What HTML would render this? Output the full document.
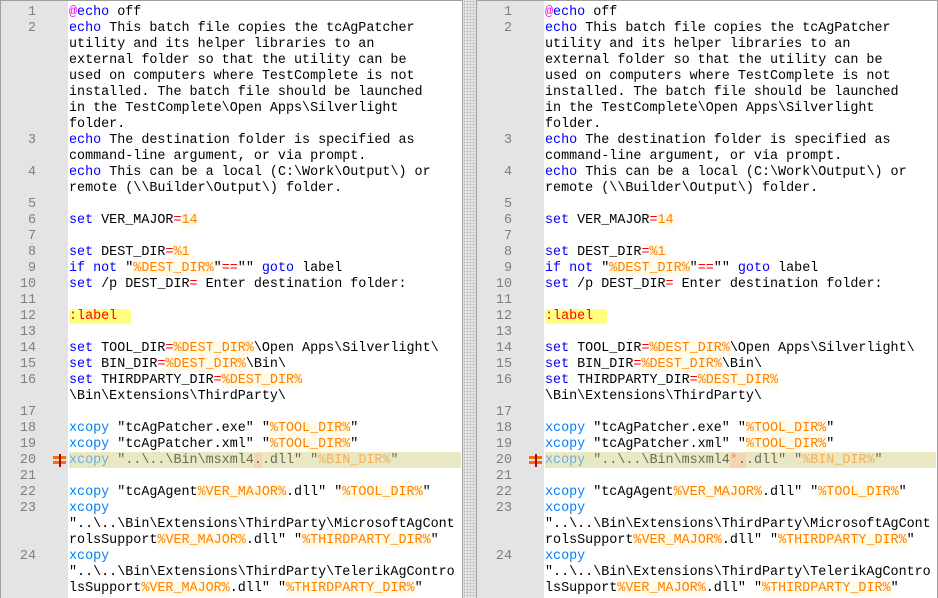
<!DOCTYPE html>
<html><head><meta charset="utf-8"><style>
body{margin:0;width:938px;height:598px;background:#fff;overflow:hidden;position:relative;font-family:"Liberation Mono",monospace;}
.pane{position:absolute;top:0;height:598px;border:1px solid #a0a0a0;border-bottom:none;background:#fff;overflow:hidden;box-sizing:border-box}
.gut{position:absolute;left:0;top:0;bottom:0;width:67px;background:#e4e4e4}
.code{position:absolute;top:4px;left:0;right:0}
.l{height:16px;line-height:16px;font-size:13.4px;white-space:pre;position:relative;color:#000}
.n{position:absolute;left:0;width:35px;text-align:right;color:#808080}
.t{position:absolute;left:68px}
.k{color:#0000ff}.x{color:#0080ff}.at{color:#ff00ff}.r{color:#ff0000}
.v{color:#ff8000;background:#fffbe6}
.lab{color:#ff0000;background:#ffff80;padding-right:14px}
.hl{position:absolute;left:68px;right:1px;top:-1px;height:16px;background:#e9e8c2}
.hl2 .t{opacity:.55}
.mk{position:absolute;left:52px;top:1px;width:13px;height:13px}
.split{position:absolute;left:463px;top:0;width:13px;height:598px;background:#f0f0f0;background-image:radial-gradient(#b8b8b8 1px,transparent 1.2px);background-size:3px 3px}
</style></head><body>
<div class="split"></div>
<div class="pane" style="left:0;width:463px" id="p1"></div>
<div class="pane" style="left:476px;width:462px" id="p2"></div>
<template id="tpl">
<div class="gut"></div>
<div class="code">
<div class="l"><span class="n">1</span><span class="t"><span class="at">@</span><span class="k">echo</span> off</span></div>
<div class="l"><span class="n">2</span><span class="t"><span class="k">echo</span> This batch file copies the tcAgPatcher</span></div>
<div class="l"><span class="t">utility and its helper libraries to an</span></div>
<div class="l"><span class="t">external folder so that the utility can be</span></div>
<div class="l"><span class="t">used on computers where TestComplete is not</span></div>
<div class="l"><span class="t">installed. The batch file should be launched</span></div>
<div class="l"><span class="t">in the TestComplete\Open Apps\Silverlight</span></div>
<div class="l"><span class="t">folder.</span></div>
<div class="l"><span class="n">3</span><span class="t"><span class="k">echo</span> The destination folder is specified as</span></div>
<div class="l"><span class="t">command-line argument, or via prompt.</span></div>
<div class="l"><span class="n">4</span><span class="t"><span class="k">echo</span> This can be a local (C:\Work\Output\) or</span></div>
<div class="l"><span class="t">remote (\\Builder\Output\) folder.</span></div>
<div class="l"><span class="n">5</span></div>
<div class="l"><span class="n">6</span><span class="t"><span class="k">set</span> VER_MAJOR<span class="r">=</span><span class="v">14</span></span></div>
<div class="l"><span class="n">7</span></div>
<div class="l"><span class="n">8</span><span class="t"><span class="k">set</span> DEST_DIR<span class="r">=</span><span class="v">%1</span></span></div>
<div class="l"><span class="n">9</span><span class="t"><span class="k">if not</span> "<span class="v">%DEST_DIR%</span>"<span class="r">==</span>"" <span class="k">goto</span> label</span></div>
<div class="l"><span class="n">10</span><span class="t"><span class="k">set</span> /p DEST_DIR<span class="r">=</span> Enter destination folder:</span></div>
<div class="l"><span class="n">11</span></div>
<div class="l"><span class="n">12</span><span class="t"><span class="lab">:label</span></span></div>
<div class="l"><span class="n">13</span></div>
<div class="l"><span class="n">14</span><span class="t"><span class="k">set</span> TOOL_DIR<span class="r">=</span><span class="v">%DEST_DIR%</span>\Open Apps\Silverlight\</span></div>
<div class="l"><span class="n">15</span><span class="t"><span class="k">set</span> BIN_DIR<span class="r">=</span><span class="v">%DEST_DIR%</span>\Bin\</span></div>
<div class="l"><span class="n">16</span><span class="t"><span class="k">set</span> THIRDPARTY_DIR<span class="r">=</span><span class="v">%DEST_DIR%</span></span></div>
<div class="l"><span class="t">\Bin\Extensions\ThirdParty\</span></div>
<div class="l"><span class="n">17</span></div>
<div class="l"><span class="n">18</span><span class="t"><span class="x">xcopy</span> "tcAgPatcher.exe" "<span class="v">%TOOL_DIR%</span>"</span></div>
<div class="l"><span class="n">19</span><span class="t"><span class="x">xcopy</span> "tcAgPatcher.xml" "<span class="v">%TOOL_DIR%</span>"</span></div>
<div class="l hl2"><div class="hl"></div><svg class="mk" viewBox="0 0 13 13"><rect x="0" y="2" width="13" height="3" fill="#f07010"/><rect x="0" y="7" width="13" height="3" fill="#f07010"/><rect x="6" y="0" width="2" height="13" fill="#c00000"/></svg><span class="n">20</span><span class="t"><span class="x">xcopy</span> "..\..\Bin\msxml4<span style="background:#f8c8a0">STAR</span>.dll" "<span class="v" style="background:none">%BIN_DIR%</span>"</span></div>
<div class="l"><span class="n">21</span></div>
<div class="l"><span class="n">22</span><span class="t"><span class="x">xcopy</span> "tcAgAgent<span class="v">%VER_MAJOR%</span>.dll" "<span class="v">%TOOL_DIR%</span>"</span></div>
<div class="l"><span class="n">23</span><span class="t"><span class="x">xcopy</span></span></div>
<div class="l"><span class="t">"..\..\Bin\Extensions\ThirdParty\MicrosoftAgCont</span></div>
<div class="l"><span class="t">rolsSupport<span class="v">%VER_MAJOR%</span>.dll" "<span class="v">%THIRDPARTY_DIR%</span>"</span></div>
<div class="l"><span class="n">24</span><span class="t"><span class="x">xcopy</span></span></div>
<div class="l"><span class="t">"..\..\Bin\Extensions\ThirdParty\TelerikAgContro</span></div>
<div class="l"><span class="t">lsSupport<span class="v">%VER_MAJOR%</span>.dll" "<span class="v">%THIRDPARTY_DIR%</span>"</span></div>
</div>
</template>
<script>
var t=document.getElementById('tpl').innerHTML;
document.getElementById('p1').innerHTML=t.replace('STAR','.');
document.getElementById('p2').innerHTML=t.replace('STAR','<span style="color:#ff4040">*</span>.');
</script>
</body></html>
